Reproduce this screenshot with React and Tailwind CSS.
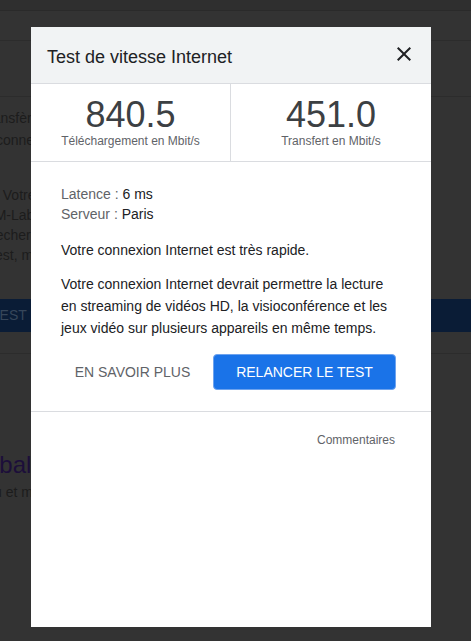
import React from "react";

export default function App() {
  return (
    <div className="relative w-[471px] h-[641px] overflow-hidden bg-[#333333] font-['Liberation_Sans',Arial,sans-serif]">
      {/* dimmed page behind the dialog */}
      <div className="flex flex-col">
        <div className="h-[11px] bg-[#2f2f2f] border-b border-[#2a2a2a]" />
        <div className="h-[30px] border-b border-[#2c2c2c]" />
        <div className="h-[56px] border-b border-[#2c2c2c]" />
        <div className="pt-[10px] text-[14px] leading-[22px] text-[#1c1c1c] whitespace-nowrap">
          <div className="-ml-[20px]">Transfère des données</div>
          <div className="-ml-[4px]">connexion Internet</div>
        </div>
        <div className="pt-[34px] text-[14px] leading-[20px] text-[#1c1c1c] whitespace-nowrap">
          <div className="-ml-[5px]">. Votre fournisseur</div>
          <div className="-ml-[10px]">(M-Lab) pour</div>
          <div className="-ml-[9px]">recherche</div>
          <div className="-ml-[5px]">est, mais</div>
        </div>
        <div className="mt-[34px] h-[33px] bg-[#0a1c36] flex items-center whitespace-nowrap">
          <span className="-ml-[9px] text-[14px] text-[#36465a]">TEST DE DÉBIT</span>
        </div>
        <div className="h-[22px] border-b border-[#2c2c2c]" />
        <div className="pt-[96px] whitespace-nowrap">
          <div className="-ml-[38px] text-[24px] leading-[30px] text-[#1c0e3a]">Global</div>
          <div className="-ml-[6px] mt-[2px] text-[14px] leading-[20px] text-[#1c1c1c]">u et mobile</div>
        </div>
      </div>

      {/* dialog */}
      <div className="absolute left-[31px] top-[27px] w-[400px] h-[600px] bg-white flex flex-col">
        <div className="h-[57px] bg-[#f1f3f4] border-b border-[#dadce0] flex items-center justify-between pl-[16px] pr-[15px]">
          <span className="pt-[4px] text-[18px] text-[#202124]">Test de vitesse Internet</span>
          <svg width="24" height="24" viewBox="0 0 24 24" className="-mt-[2px]">
            <path
              fill="#202124"
              d="M19 6.41L17.59 5 12 10.59 6.41 5 5 6.41 10.59 12 5 17.59 6.41 19 12 13.41 17.59 19 19 17.59 13.41 12z"
            />
          </svg>
        </div>

        <div className="grid grid-cols-2 border-b border-[#dadce0]">
          <div className="flex flex-col items-center pt-[12px] pb-[13px] border-r border-[#dadce0]">
            <span className="text-[36px] leading-[38px] text-[#3c4043]">840.5</span>
            <span className="text-[12px] leading-[14px] text-[#5f6368]">Téléchargement en Mbit/s</span>
          </div>
          <div className="flex flex-col items-center pt-[12px] pb-[13px]">
            <span className="text-[36px] leading-[38px] text-[#3c4043]">451.0</span>
            <span className="text-[12px] leading-[14px] text-[#5f6368]">Transfert en Mbit/s</span>
          </div>
        </div>

        <div className="px-[30px] pt-[22px] pb-[21px] text-[14px] text-[#202124] border-b border-[#dadce0]">
          <div className="leading-[20px]">
            <span className="text-[#5f6368]">Latence : </span>6 ms
          </div>
          <div className="leading-[20px]">
            <span className="text-[#5f6368]">Serveur : </span>Paris
          </div>
          <p className="mt-[16px] leading-[20px]">Votre connexion Internet est très rapide.</p>
          <p className="mt-[13px] leading-[22px]">
            Votre connexion Internet devrait permettre la lecture en streaming de vidéos HD, la visioconférence et les jeux vidéo sur plusieurs appareils en même temps.
          </p>
          <div className="mt-[15px] flex items-center gap-[9px]">
            <button className="h-[36px] w-[143px] text-[14px] text-[#5f6368] uppercase whitespace-nowrap">En savoir plus</button>
            <button className="h-[36px] w-[183px] rounded-[4px] bg-[#1a73e8] border border-[#6ea3ee] text-[14px] text-white uppercase whitespace-nowrap">
              Relancer le test
            </button>
          </div>
        </div>

        <div className="flex justify-end pt-[20px] pr-[36px]">
          <span className="text-[12px] leading-[16px] text-[#5f6368]">Commentaires</span>
        </div>
      </div>
    </div>
  );
}
